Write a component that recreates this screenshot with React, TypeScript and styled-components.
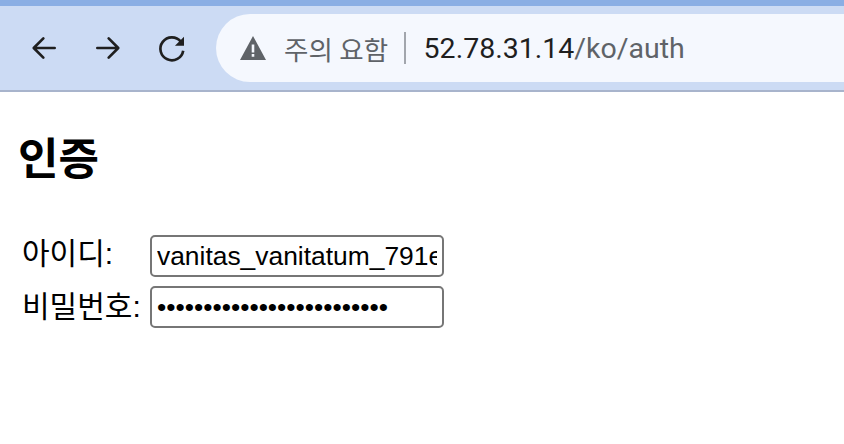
import React from 'react'
import styled, { createGlobalStyle } from 'styled-components'

const GlobalStyle = createGlobalStyle`
  html, body {
    margin: 0;
    padding: 0;
    background: #fff;
    overflow: hidden;
  }
  body {
    font-family: 'Liberation Sans', 'Noto Sans CJK KR', sans-serif;
  }
`

const BrowserBar = styled.div`
  height: 92px;
  box-sizing: border-box;
  border-top: 6px solid #8aaee4;
  border-bottom: 2px solid #a8b4cc;
  background: #ccdbf4;
  display: flex;
  align-items: center;
  padding-left: 28px;
  overflow: hidden;
`

const NavButtons = styled.div`
  display: flex;
  align-items: center;
  gap: 32px;
  margin-right: 28px;
`

const NavIcon = styled.svg`
  display: block;
  width: 32px;
  height: 32px;
  color: #1f1f1f;
`

const AddressPill = styled.div`
  flex: none;
  width: 700px;
  height: 68px;
  border-radius: 34px;
  background: #f5f8fe;
  display: flex;
  align-items: center;
  padding-left: 24px;
  box-sizing: border-box;
  font-family: 'Roboto', 'Noto Sans CJK KR', sans-serif;
`

const WarningIcon = styled.svg`
  display: block;
  width: 26px;
  height: 24px;
  color: #5f6368;
  margin-right: 18px;
`

const SecurityLabel = styled.span`
  font-size: 26.5px;
  color: #5f6368;
`

const Divider = styled.span`
  width: 1.5px;
  height: 32px;
  background: #a2a6ad;
  margin: 0 18px 0 16px;
`

const UrlHost = styled.span`
  font-size: 28.5px;
  color: #1f1f1f;
`

const UrlPath = styled.span`
  font-size: 28.5px;
  color: #5f6368;
`

const Page = styled.main`
  padding: 43px 0 0 18px;
  color: #000;
`

const Title = styled.h1`
  margin: 0 0 50px;
  font-size: 44px;
  line-height: 50px;
  font-weight: 700;
`

const AuthForm = styled.form`
  display: grid;
  grid-template-columns: 132px 294px;
  row-gap: 9px;
`

const FieldLabel = styled.label<{ $shift: number }>`
  font-size: 30px;
  line-height: 42px;
  padding-left: 4px;
  white-space: nowrap;
  transform: translateY(${(p) => p.$shift}px);
`

const TextInput = styled.input`
  width: 294px;
  height: 42px;
  box-sizing: border-box;
  border: 2px solid #767676;
  border-radius: 5px;
  padding: 0 5px;
  background: #fff;
  color: #000;
  font-family: 'Liberation Sans', sans-serif;
  font-size: 26.4px;
  outline: none;
`

export default function App() {
  return (
    <>
      <GlobalStyle />
      <BrowserBar>
        <NavButtons>
          <NavIcon viewBox="0 0 24 24" fill="none" stroke="currentColor" strokeWidth="2" strokeLinecap="round" strokeLinejoin="round">
            <path d="M20 12H4.5M11.5 4.8 4.3 12l7.2 7.2" />
          </NavIcon>
          <NavIcon viewBox="0 0 24 24" fill="none" stroke="currentColor" strokeWidth="2" strokeLinecap="round" strokeLinejoin="round">
            <path d="M4 12h15.5M12.5 4.8l7.2 7.2-7.2 7.2" />
          </NavIcon>
          <NavIcon viewBox="0 0 24 24">
            <path fill="none" stroke="currentColor" strokeWidth="2" d="M18.6 7.2A8.6 8.6 0 1 0 20.4 14" />
            <path fill="currentColor" d="M21 3.6V10.4H14.2Z" />
          </NavIcon>
        </NavButtons>
        <AddressPill>
          <WarningIcon viewBox="0 0 26 24">
            <path fill="currentColor" fillRule="evenodd" d="M13 0 26 24H0ZM11.7 8.5v8h2.6v-8ZM11.7 18v2.8h2.6V18Z" />
          </WarningIcon>
          <SecurityLabel>주의 요함</SecurityLabel>
          <Divider />
          <UrlHost>52.78.31.14</UrlHost>
          <UrlPath>/ko/auth</UrlPath>
        </AddressPill>
      </BrowserBar>
      <Page>
        <Title>인증</Title>
        <AuthForm>
          <FieldLabel htmlFor="auth-id" $shift={-2}>아이디:</FieldLabel>
          <TextInput id="auth-id" type="text" defaultValue="vanitas_vanitatum_791e3f" />
          <FieldLabel htmlFor="auth-pw" $shift={0}>비밀번호:</FieldLabel>
          <TextInput id="auth-pw" type="password" defaultValue="sssssssssssssssssssssssss" />
        </AuthForm>
      </Page>
    </>
  )
}
